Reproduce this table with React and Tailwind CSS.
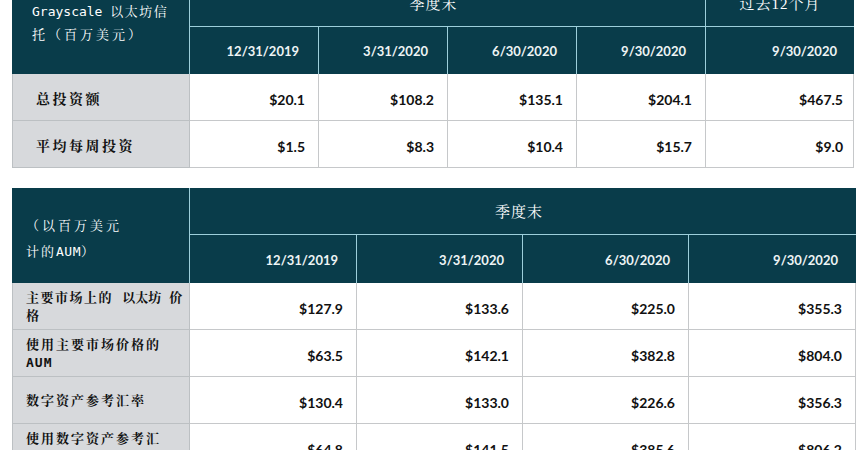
const CJK = "font-['DejaVu_Sans_Mono','Noto_Serif_CJK_SC','Noto_Sans_CJK_SC',monospace]";
const SERIF = "font-['Liberation_Serif','Noto_Serif_CJK_SC','Noto_Sans_CJK_SC',serif]";
const NUM = "font-['Lato','Liberation_Sans',sans-serif]";

const T1_DATES = ["12/31/2019", "3/31/2020", "6/30/2020", "9/30/2020", "9/30/2020"];
const T1_ROWS = [
  { label: "总投资额", vals: ["$20.1", "$108.2", "$135.1", "$204.1", "$467.5"] },
  { label: "平均每周投资", vals: ["$1.5", "$8.3", "$10.4", "$15.7", "$9.0"] },
];

const T2_DATES = ["12/31/2019", "3/31/2020", "6/30/2020", "9/30/2020"];
const T2_ROWS = [
  {
    label: (
      <>
        <span className="tracking-[1.5px]">主要市场上的 </span>
        <span>以太坊</span>
        <span> 价</span>
        <br />
        <span>格</span>
      </>
    ),
    vals: ["$127.9", "$133.6", "$225.0", "$355.3"],
  },
  {
    label: (
      <>
        <span className="tracking-[2px]">使用主要市场价格的</span>
        <br />
        <span className="tracking-[1px]">AUM</span>
      </>
    ),
    vals: ["$63.5", "$142.1", "$382.8", "$804.0"],
  },
  {
    label: <span className="tracking-[2px]">数字资产参考汇率</span>,
    vals: ["$130.4", "$133.0", "$226.6", "$356.3"],
  },
  {
    label: (
      <>
        <span className="tracking-[2px]">使用数字资产参考汇</span>
        <br />
        <span className="tracking-[2px]">率的</span>
        <span className="tracking-[1px]">AUM</span>
      </>
    ),
    vals: ["$64.8", "$141.5", "$385.6", "$806.2"],
  },
];

function TrustTable() {
  return (
    <div className="ml-[12px] -mt-[17px] grid w-[842px] grid-cols-[178px_129px_129px_129px_129px_148px] grid-rows-[44px_47px_47px_47px]">
      <div className={`row-span-2 border-r border-[#9dcfdb] bg-[#093c4a] pl-[20px] pt-[18px] text-[13px] leading-[22.5px] text-white ${CJK}`}>
        Grayscale <span className="tracking-[1.5px]">以太坊信</span>
        <br />
        <span className="tracking-[3px]">托（百万美元）</span>
      </div>
      <div className={`col-span-4 flex items-center justify-center border-r border-b border-[#9dcfdb] bg-[#093c4a] pr-[28px] text-[15px] tracking-[1px] text-white ${SERIF}`}>
        季度末
      </div>
      <div className={`flex items-center justify-center border-b border-[#9dcfdb] bg-[#093c4a] text-[15px] tracking-[1px] text-white ${SERIF}`}>
        过去12个月
      </div>
      {T1_DATES.map((d, i) => (
        <div
          key={i}
          className={[
            "flex items-center justify-end bg-[#093c4a] pt-[3px] text-[13px] font-bold text-[#eef4f5]",
            NUM,
            i < 4 ? "border-r border-[#9dcfdb] pr-[19px]" : "pr-[17px]",
          ].join(" ")}
        >
          {d}
        </div>
      ))}
      {T1_ROWS.map((r) => (
        <Row1 key={r.label} row={r} />
      ))}
    </div>
  );
}

function Row1({ row }) {
  return (
    <>
      <div className={`flex items-center border-l border-r border-b border-[#bcc0c3] bg-[#d7d9dc] pl-[23px] pt-[4px] text-[14px] font-bold tracking-[2.5px] text-[#111] ${CJK}`}>
        {row.label}
      </div>
      {row.vals.map((v, i) => (
        <div
          key={i}
          className={[
            "flex items-center justify-end border-r border-b border-[#c6c8ca] bg-white pt-[4px] text-[14px] font-bold text-[#111]",
            NUM,
            i < 4 ? "pr-[13px]" : "pr-[10px]",
          ].join(" ")}
        >
          {v}
        </div>
      ))}
    </>
  );
}

function AumTable() {
  return (
    <div className="ml-[12px] mt-[20px] grid w-[844px] grid-cols-[178px_167px_166px_166px_167px] grid-rows-[47px_48px_47px_47px_47px_47px]">
      <div className={`row-span-2 border-r border-[#9dcfdb] bg-[#093c4a] pl-[14px] pt-[25px] text-[13px] leading-[26px] text-white ${CJK}`}>
        <span className="tracking-[3px]">（以百万美元</span>
        <br />
        <span className="tracking-[2px]">计的</span>
        <span className="tracking-[0.5px]">AUM）</span>
      </div>
      <div className={`col-span-4 flex items-center justify-center border-b border-[#9dcfdb] bg-[#093c4a] pr-[8px] pt-[2px] text-[15px] tracking-[1px] text-white ${SERIF}`}>
        季度末
      </div>
      {T2_DATES.map((d, i) => (
        <div
          key={i}
          className={[
            "flex items-center justify-end bg-[#093c4a] pr-[18px] pt-[3px] text-[13px] font-bold text-[#eef4f5]",
            NUM,
            i < 3 ? "border-r border-[#9dcfdb]" : "",
          ].join(" ")}
        >
          {d}
        </div>
      ))}
      {T2_ROWS.map((r, k) => (
        <div key={k} className="contents">
          <div className={`flex items-center overflow-hidden border-l border-r border-b border-[#bcc0c3] bg-[#d7d9dc] pl-[13px] pt-[1px] text-[13px] font-bold leading-[18px] text-[#111] ${CJK}`}>
            <div className="whitespace-nowrap">{r.label}</div>
          </div>
          {r.vals.map((v, i) => (
            <div
              key={i}
              className={`flex items-center justify-end border-r border-b border-[#c6c8ca] bg-white pr-[13px] pt-[4px] text-[14px] font-bold text-[#111] ${NUM}`}
            >
              {v}
            </div>
          ))}
        </div>
      ))}
    </div>
  );
}

export default function App() {
  return (
    <div className="h-[450px] w-[863px] overflow-hidden bg-white">
      <TrustTable />
      <AumTable />
    </div>
  );
}
